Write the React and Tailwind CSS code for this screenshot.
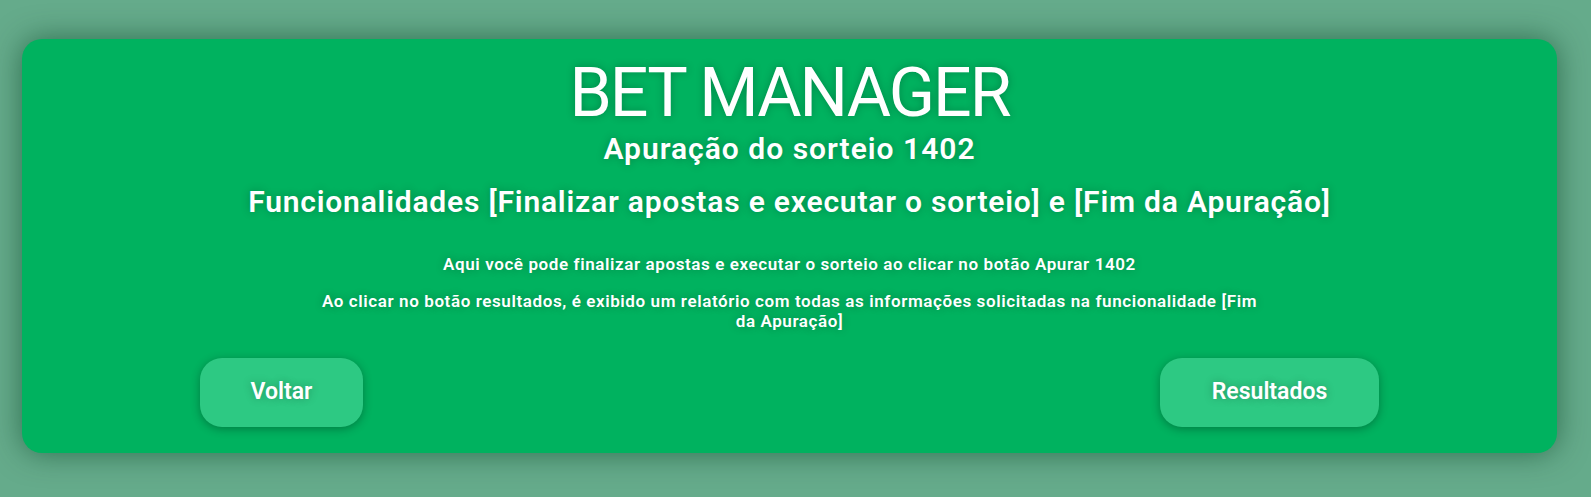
import React from "react";

const Botao = ({ label, className }) => (
  <button
    className={`h-[69px] rounded-[22px] bg-[#2dc983] text-white text-[23px] font-semibold shadow-[0_2px_10px_rgba(0,0,0,0.3)] [text-shadow:0_0_8px_rgba(0,0,0,0.25)] ${className}`}
  >
    {label}
  </button>
);

export default function App() {
  return (
    <div className="w-full h-[497px] bg-[#65ab8b] pt-[39px] pl-[22px] font-[Roboto,'Liberation_Sans',sans-serif]">
      <div className="w-[1535px] h-[414px] bg-[#00b25f] rounded-[20px] shadow-[0_0_30px_rgba(0,60,30,0.55)] flex flex-col items-center text-white text-center [text-shadow:0_0_8px_rgba(0,0,0,0.25)]">
        <h1 className="text-[68px] leading-[80px] font-[450] tracking-[-2px] mt-[14px]">BET MANAGER</h1>
        <h2 className="text-[30px] leading-[35px] font-semibold tracking-[1px] -mt-[2px]">Apuração do sorteio 1402</h2>
        <h3 className="text-[30px] leading-[35px] font-semibold tracking-[0.8px] mt-[18px]">
          Funcionalidades [Finalizar apostas e executar o sorteio] e [Fim da Apuração]
        </h3>
        <div className="w-[940px] text-[17px] leading-[20px] font-semibold tracking-[0.6px] mt-[35px]">
          <p>Aqui você pode finalizar apostas e executar o sorteio ao clicar no botão Apurar 1402</p>
          <p className="mt-[17px]">
            Ao clicar no botão resultados, é exibido um relatório com todas as informações solicitadas na funcionalidade [Fim da Apuração]
          </p>
        </div>
        <div className="w-full flex justify-between px-[178px] mt-[27px]">
          <Botao label="Voltar" className="w-[163px]" />
          <Botao label="Resultados" className="w-[219px]" />
        </div>
      </div>
    </div>
  );
}
